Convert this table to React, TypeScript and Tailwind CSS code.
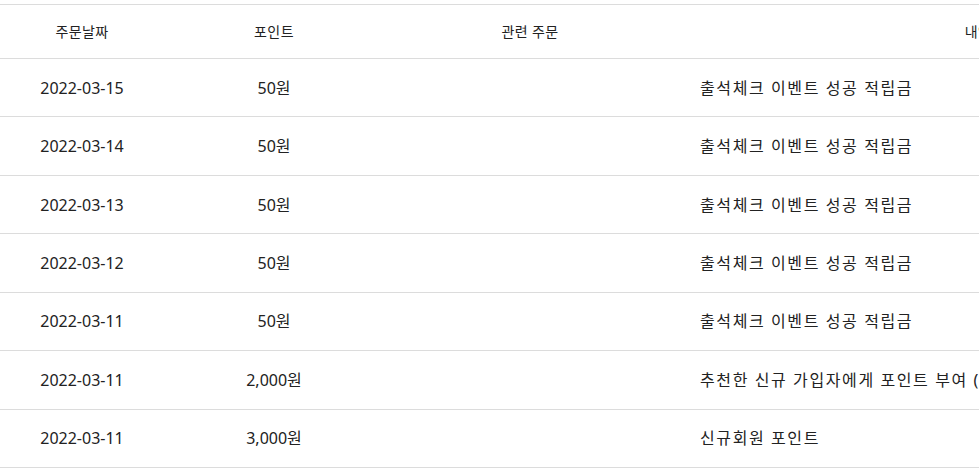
const rows = [
  { date: "2022-03-15", point: "50원", order: "", desc: "출석체크 이벤트 성공 적립금" },
  { date: "2022-03-14", point: "50원", order: "", desc: "출석체크 이벤트 성공 적립금" },
  { date: "2022-03-13", point: "50원", order: "", desc: "출석체크 이벤트 성공 적립금" },
  { date: "2022-03-12", point: "50원", order: "", desc: "출석체크 이벤트 성공 적립금" },
  { date: "2022-03-11", point: "50원", order: "", desc: "출석체크 이벤트 성공 적립금" },
  { date: "2022-03-11", point: "2,000원", order: "", desc: "추천한 신규 가입자에게 포인트 부여 (newuser01)" },
  { date: "2022-03-11", point: "3,000원", order: "", desc: "신규회원 포인트" },
];

const cols = "grid grid-cols-[164px_220px_292px_604px]";

export default function App() {
  return (
    <div className="w-full h-[475px] overflow-hidden bg-white pt-1 text-[#222] font-['Noto_Sans','Noto_Sans_CJK_KR',sans-serif]">
      <div className="w-[1280px]">
        {/* header */}
        <div className={`${cols} h-[55px] border-y border-[#dcdcdc] items-center text-[14px] tracking-[0.4px]`}>
          <div className="text-center">주문날짜</div>
          <div className="text-center">포인트</div>
          <div className="text-center">관련 주문</div>
          <div className="text-center">내역</div>
        </div>

        {rows.map((r, i) => (
          <div key={i} className={`${cols} h-[58.43px] border-b border-[#dcdcdc] items-center text-base`}>
            <div className="text-center">{r.date}</div>
            <div className="text-center">{r.point}</div>
            <div className="text-center">{r.order}</div>
            <div className="pl-6 whitespace-nowrap tracking-[1.6px]">{r.desc}</div>
          </div>
        ))}
      </div>
    </div>
  );
}
